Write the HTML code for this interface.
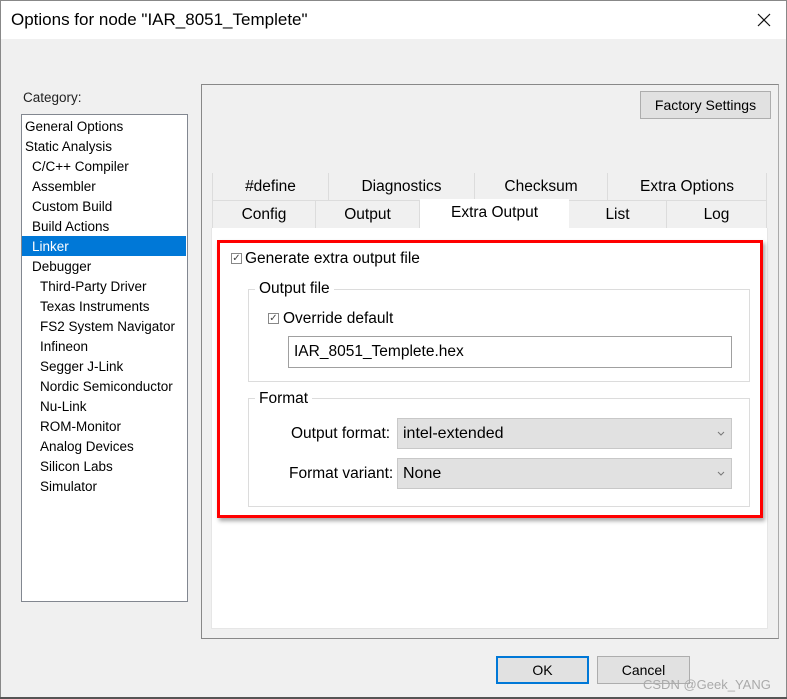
<!DOCTYPE html>
<html><head><meta charset="utf-8"><style>
*{margin:0;padding:0;box-sizing:border-box}
body{width:787px;height:699px;background:#f0f0f0;font-family:"Liberation Sans",sans-serif;color:#000;position:relative;overflow:hidden}
.a{position:absolute;white-space:nowrap}
.li{position:absolute;font-size:13.5px;height:20px;line-height:20px}
.tab{position:absolute;font-size:15.5px;text-align:center;line-height:28px;height:27px;background:#f0f0f0;border-right:1px solid #dcdcdc}
.btn{position:absolute;background:#e1e1e1;border:1px solid #adadad;font-size:14px;text-align:center}
.cb{position:absolute;width:11px;height:11px;border:1px solid #888;background:#fff;font-size:10px;line-height:9px;text-align:center;color:#444}
.grp{position:absolute;border:1px solid #dcdcdc}
.sel{position:absolute;background:#e1e1e1;border:1px solid #c8c8c8;font-size:16px;line-height:30px;padding-left:5px}
</style></head><body>
<div class="a" style="left:0;top:0;width:787px;height:39px;background:#fff;border:1px solid #888;border-bottom:none"></div>
<div class="a" style="left:0;top:0;width:1px;height:699px;background:#888"></div>
<div class="a" style="left:786px;top:0;width:1px;height:699px;background:#888"></div>
<div class="a" style="left:0;top:697px;width:787px;height:2px;background:#555"></div>
<div class="a" style="left:11px;top:10px;font-size:17px">Options for node "IAR_8051_Templete"</div>
<svg class="a" style="left:757px;top:13px" width="14" height="14"><path d="M1 1L13 13M13 1L1 13" stroke="#111" stroke-width="1.2"/></svg>

<div class="a" style="left:23px;top:90px;font-size:13.5px;color:#222">Category:</div>
<div class="a" style="left:21px;top:114px;width:167px;height:488px;background:#fff;border:1px solid #828790"></div>
<div class="a" style="left:22px;top:236px;width:164px;height:20px;background:#0078d7"></div>
<div class="li" style="left:25px;top:117px">General Options</div>
<div class="li" style="left:25px;top:137px">Static Analysis</div>
<div class="li" style="left:32px;top:157px">C/C++ Compiler</div>
<div class="li" style="left:32px;top:177px">Assembler</div>
<div class="li" style="left:32px;top:197px">Custom Build</div>
<div class="li" style="left:32px;top:217px">Build Actions</div>
<div class="li" style="left:32px;top:237px;color:#fff">Linker</div>
<div class="li" style="left:32px;top:257px">Debugger</div>
<div class="li" style="left:40px;top:277px">Third-Party Driver</div>
<div class="li" style="left:40px;top:297px">Texas Instruments</div>
<div class="li" style="left:40px;top:317px">FS2 System Navigator</div>
<div class="li" style="left:40px;top:337px">Infineon</div>
<div class="li" style="left:40px;top:357px">Segger J-Link</div>
<div class="li" style="left:40px;top:377px">Nordic Semiconductor</div>
<div class="li" style="left:40px;top:397px">Nu-Link</div>
<div class="li" style="left:40px;top:417px">ROM-Monitor</div>
<div class="li" style="left:40px;top:437px">Analog Devices</div>
<div class="li" style="left:40px;top:457px">Silicon Labs</div>
<div class="li" style="left:40px;top:477px">Simulator</div>

<div class="a" style="left:201px;top:84px;width:578px;height:555px;border:1px solid #888;border-right-color:#aaa"></div>
<div class="btn" style="left:640px;top:91px;width:131px;height:28px;line-height:27px">Factory Settings</div>

<div class="a" style="left:212px;top:173px;width:555px;height:55px;border:1px solid #dcdcdc;background:#f0f0f0"></div>
<div class="tab" style="left:213px;top:173px;width:116px">#define</div>
<div class="tab" style="left:329px;top:173px;width:146px">Diagnostics</div>
<div class="tab" style="left:475px;top:173px;width:133px">Checksum</div>
<div class="tab" style="left:608px;top:173px;width:158px;border-right:none">Extra Options</div>
<div class="a" style="left:213px;top:200px;width:553px;height:1px;background:#dcdcdc"></div>
<div class="tab" style="left:213px;top:201px;width:103px">Config</div>
<div class="tab" style="left:316px;top:201px;width:104px">Output</div>
<div class="tab" style="left:420px;top:199px;width:149px;height:30px;background:#fff;line-height:27px;border:none">Extra Output</div>
<div class="tab" style="left:569px;top:201px;width:98px">List</div>
<div class="tab" style="left:667px;top:201px;width:99px;border-right:none">Log</div>
<div class="a" style="left:211px;top:228px;width:557px;height:401px;background:#fff;border:1px solid #e6e6e6;border-top:none"></div>

<div class="cb" style="left:231px;top:253px">✓</div>
<div class="a" style="left:245px;top:250px;font-size:15.5px">Generate extra output file</div>
<div class="grp" style="left:248px;top:289px;width:502px;height:93px"></div>
<div class="a" style="left:255px;top:280px;font-size:15.5px;background:#fff;padding:0 4px">Output file</div>
<div class="cb" style="left:268px;top:313px">✓</div>
<div class="a" style="left:283px;top:310px;font-size:15.5px">Override default</div>
<div class="a" style="left:288px;top:336px;width:444px;height:32px;border:1px solid #a0a0a0;font-size:15.5px;line-height:30px;padding-left:5px">IAR_8051_Templete.hex</div>

<div class="grp" style="left:248px;top:398px;width:502px;height:109px"></div>
<div class="a" style="left:255px;top:390px;font-size:15.5px;background:#fff;padding:0 4px">Format</div>
<div class="a" style="left:291px;top:425px;font-size:15.5px">Output format:</div>
<div class="sel" style="left:397px;top:418px;width:335px;height:31px">intel-extended</div>
<div class="a" style="left:289px;top:465px;font-size:15.5px">Format variant:</div>
<div class="sel" style="left:397px;top:458px;width:335px;height:31px">None</div>
<svg class="a" style="left:717px;top:431px" width="8" height="6"><path d="M1 1L4 4L7 1" stroke="#777" fill="none"/></svg>
<svg class="a" style="left:717px;top:471px" width="8" height="6"><path d="M1 1L4 4L7 1" stroke="#777" fill="none"/></svg>

<div class="a" style="left:217px;top:240px;width:546px;height:278px;border:3px solid #f00;box-shadow:2px 3px 4px rgba(0,0,0,.35)"></div>

<div class="btn" style="left:496px;top:656px;width:93px;height:28px;line-height:25px;border:2px solid #0078d7;background:#e1e1e1">OK</div>
<div class="btn" style="left:597px;top:656px;width:93px;height:28px;line-height:27px">Cancel</div>
<div class="a" style="left:643px;top:677px;font-size:13px;color:#aaa">CSDN @Geek_YANG</div>
</body></html>
